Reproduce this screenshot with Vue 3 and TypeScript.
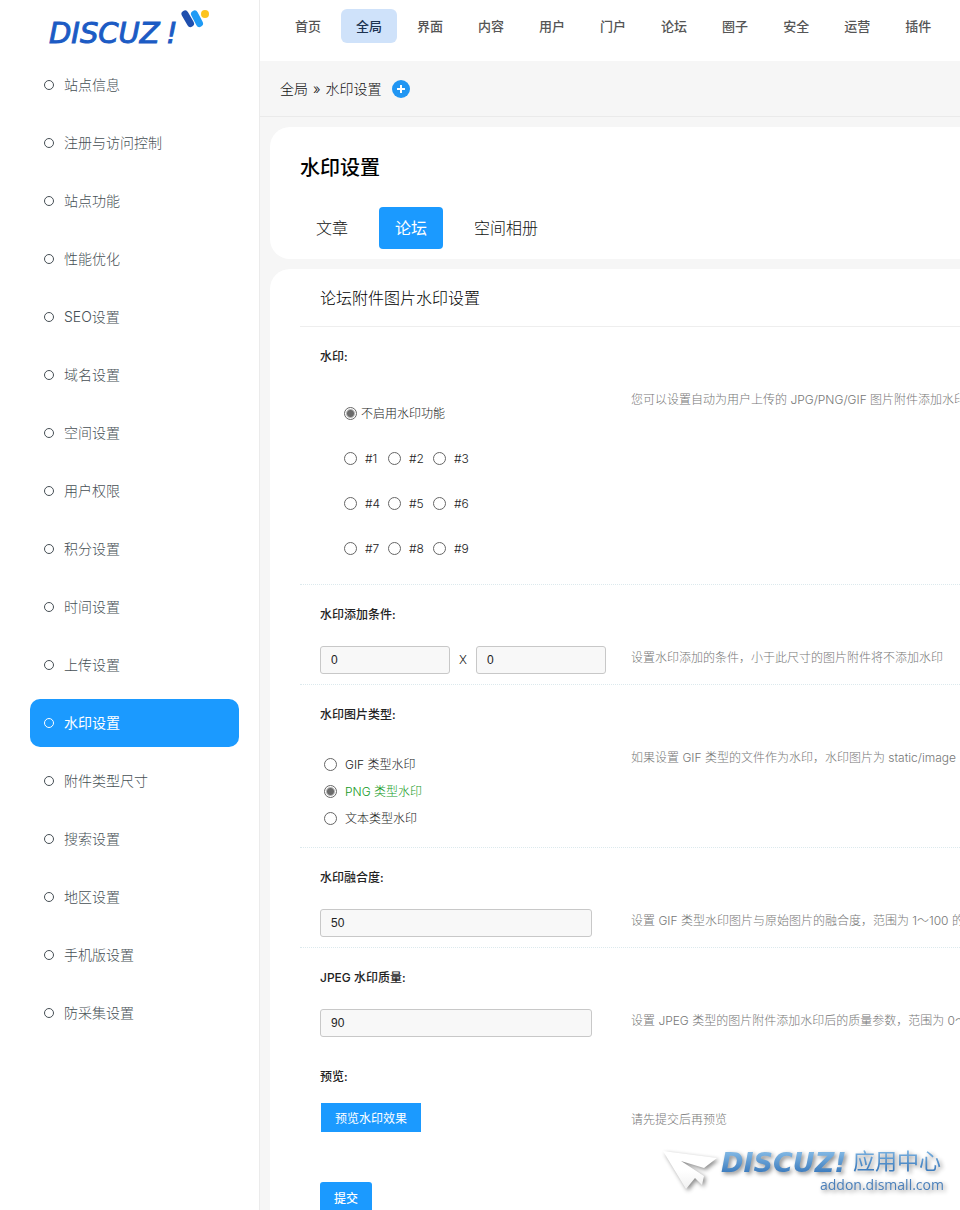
<script setup lang="ts">
import { ref } from 'vue'

const sideItems: string[] = [
  '站点信息', '注册与访问控制', '站点功能', '性能优化', 'SEO设置', '域名设置',
  '空间设置', '用户权限', '积分设置', '时间设置', '上传设置', '水印设置',
  '附件类型尺寸', '搜索设置', '地区设置', '手机版设置', '防采集设置',
]
const topItems: string[] = [
  '首页', '全局', '界面', '内容', '用户', '门户', '论坛', '圈子', '安全', '运营', '插件',
]
const tabs: string[] = ['文章', '论坛', '空间相册']
const types = [
  { value: 'gif', label: 'GIF 类型水印' },
  { value: 'png', label: 'PNG 类型水印' },
  { value: 'text', label: '文本类型水印' },
]

const activeSide = ref('水印设置')
const activeTop = ref('全局')
const activeTab = ref('论坛')
const position = ref(0)
const markType = ref('png')
const minWidth = ref('0')
const minHeight = ref('0')
const opacity = ref('50')
const quality = ref('90')
</script>

<template>
  <div class="shell">
    <aside class="side">
      <a class="logo" href="#" aria-label="Discuz!">
        <svg width="240" height="61" viewBox="0 0 240 61">
          <text x="49" y="43" class="logo-text">DISCUZ</text>
          <text x="166" y="43" class="logo-text">!</text>
          <g stroke-linecap="round" stroke-width="7" fill="none">
            <path d="M194.500 14L199.500 23.500" stroke="#1f9bf5" />
            <path d="M185 14L190.500 23.500" stroke="#1f4fae" />
          </g>
          <circle cx="205" cy="14" r="4" fill="#fcc41f" />
        </svg>
      </a>
      <nav class="side-nav">
        <a
          v-for="item in sideItems"
          :key="item"
          href="#"
          class="side-item"
          :class="{ active: item === activeSide }"
          @click.prevent="activeSide = item"
        >
          <span class="ring"></span>{{ item }}
        </a>
      </nav>
    </aside>

    <div class="main">
      <nav class="top-nav">
        <a
          v-for="item in topItems"
          :key="item"
          href="#"
          class="top-item"
          :class="{ active: item === activeTop }"
          @click.prevent="activeTop = item"
        >{{ item }}</a>
      </nav>

      <div class="crumbs">
        <div class="trail"><span>全局</span><span>»</span><span>水印设置</span></div>
        <button class="add" type="button" aria-label="添加">
          <svg width="18" height="18" viewBox="0 0 18 18">
            <circle cx="9" cy="9" r="9" fill="#2196f3" />
            <path d="M9 5v8M5 9h8" stroke="#fff" stroke-width="2" />
          </svg>
        </button>
      </div>

      <section class="card head-card">
        <h1>水印设置</h1>
        <div class="tabs">
          <a
            v-for="tab in tabs"
            :key="tab"
            href="#"
            class="tab"
            :class="{ active: tab === activeTab }"
            @click.prevent="activeTab = tab"
          >{{ tab }}</a>
        </div>
      </section>

      <form class="card form-card" @submit.prevent>
        <h2>论坛附件图片水印设置</h2>

        <fieldset class="row">
          <legend class="caption">水印:</legend>
          <div class="body">
            <div class="positions">
              <label class="radio near"><input v-model="position" type="radio" name="position" :value="0" />不启用水印功能</label>
              <div v-for="line in 3" :key="line" class="trio">
                <label v-for="n in 3" :key="n" class="radio">
                  <input v-model="position" type="radio" name="position" :value="(line - 1) * 3 + n" />#{{ (line - 1) * 3 + n }}
                </label>
              </div>
            </div>
            <p class="hint">您可以设置自动为用户上传的 JPG/PNG/GIF 图片附件添加水印</p>
          </div>
        </fieldset>

        <fieldset class="row">
          <legend class="caption">水印添加条件:</legend>
          <div class="body">
            <div class="pair">
              <input v-model="minWidth" class="field" type="text" aria-label="宽度" />
              <span>X</span>
              <input v-model="minHeight" class="field" type="text" aria-label="高度" />
            </div>
            <p class="hint">设置水印添加的条件，小于此尺寸的图片附件将不添加水印</p>
          </div>
        </fieldset>

        <fieldset class="row">
          <legend class="caption">水印图片类型:</legend>
          <div class="body">
            <div class="types">
              <label v-for="t in types" :key="t.value" class="radio" :class="{ chosen: markType === t.value }">
                <input v-model="markType" type="radio" name="type" :value="t.value" />{{ t.label }}
              </label>
            </div>
            <p class="hint">如果设置 GIF 类型的文件作为水印，水印图片为 static/image</p>
          </div>
        </fieldset>

        <div class="row">
          <label class="caption" for="opacity">水印融合度:</label>
          <div class="body">
            <input id="opacity" v-model="opacity" class="field wide" type="text" />
            <p class="hint">设置 GIF 类型水印图片与原始图片的融合度，范围为 1～100 的</p>
          </div>
        </div>

        <div class="row plain">
          <label class="caption" for="quality">JPEG 水印质量:</label>
          <div class="body">
            <input id="quality" v-model="quality" class="field wide" type="text" />
            <p class="hint">设置 JPEG 类型的图片附件添加水印后的质量参数，范围为 0～</p>
          </div>
        </div>

        <div class="row plain">
          <span class="caption">预览:</span>
          <div class="body">
            <div class="preview-cell"><button class="preview" type="button">预览水印效果</button></div>
            <p class="hint">请先提交后再预览</p>
          </div>
        </div>

        <button class="submit" type="submit">提交</button>
      </form>
    </div>

    <svg class="stamp" width="320" height="80" viewBox="0 0 320 80" aria-hidden="true">
      <defs>
        <linearGradient id="stampBlue" x1="0" y1="0" x2="0" y2="1">
          <stop offset="0.2" stop-color="#7db4e2" />
          <stop offset="0.8" stop-color="#3f7ebf" />
        </linearGradient>
        <linearGradient id="stampWhite" x1="0" y1="0" x2="0" y2="1">
          <stop offset="0.5" stop-color="#ffffff" />
          <stop offset="1" stop-color="#f1f1f1" />
        </linearGradient>
      </defs>
      <g class="shade">
        <path d="M23 21L77 28L64 38L41 31L64 46L62 55L55 48L46 59Z" fill="url(#stampWhite)" />
        <text x="81" y="42" class="stamp-brand">DISCUZ!</text>
        <text x="213" y="39" class="stamp-cn">应用中心</text>
        <text x="180" y="60" class="stamp-url">addon.dismall.com</text>
      </g>
    </svg>
  </div>
</template>

<style>
body {
  margin: 0;
  background: #f6f6f6;
}
</style>

<style scoped>
* {
  box-sizing: border-box;
}
.shell {
  display: flex;
  height: 100vh;
  overflow: hidden;
  position: relative;
  background: #f6f6f6;
  font-family: Inter, "Noto Sans CJK SC", sans-serif;
  font-size: 12px;
  font-weight: 300;
  line-height: 20px;
  color: #222;
}
a {
  color: inherit;
  text-decoration: none;
}
.side {
  flex: 0 0 260px;
  background: #fff;
  border-right: 1px solid #ebebeb;
}
.logo,
.logo svg {
  display: block;
}
.logo-text {
  font: italic 400 29px "DejaVu Sans", sans-serif;
  fill: #1c5bc4;
  stroke: #1c5bc4;
  stroke-width: 1;
}
.side-nav {
  display: flex;
  flex-direction: column;
  gap: 10px;
  padding: 0 20px 0 30px;
}
.side-item {
  display: flex;
  align-items: center;
  gap: 10px;
  height: 48px;
  padding-left: 14px;
  border-radius: 10px;
  font-size: 14px;
  color: #464f55;
}
.side-item.active {
  background: #1b9aff;
  color: #fff;
  font-weight: 400;
}
.ring {
  width: 10px;
  height: 10px;
  border: 1px solid currentColor;
  border-radius: 50%;
}
.main {
  flex: 1;
  min-width: 0;
  overflow: auto;
  scrollbar-width: none;
}
.top-nav {
  display: flex;
  gap: 5px;
  height: 61px;
  padding: 9px 20px;
  background: #fff;
  overflow: hidden;
}
.top-item {
  flex: none;
  height: 34px;
  padding: 0 15px;
  border-radius: 6px;
  font-size: 13px;
  font-weight: 500;
  line-height: 34px;
  color: #555;
}
.top-item.active {
  background: #cfe2fa;
  color: #1c3350;
}
.crumbs {
  display: flex;
  align-items: center;
  gap: 10px;
  height: 56px;
  padding: 0 20px;
  border-bottom: 1px solid #eaeaea;
  font-size: 14px;
  color: #111;
}
.trail {
  display: flex;
  gap: 5px;
}
.add {
  padding: 0;
  border: 0;
  background: none;
}
.add svg {
  display: block;
}
.card {
  margin: 10px 0 0 10px;
  background: #fff;
  border-radius: 20px 0 0 20px;
}
.head-card {
  padding: 26px 30px 10px;
}
h1 {
  margin: 0 0 24px;
  font-size: 20px;
  font-weight: 500;
  line-height: 30px;
  color: #000;
}
.tabs {
  display: flex;
  gap: 15px;
}
.tab {
  height: 42px;
  padding: 0 16px;
  border-radius: 4px;
  font-size: 16px;
  line-height: 42px;
  color: #111;
}
.tab.active {
  background: #1b9aff;
  color: #fff;
  font-weight: 400;
}
.form-card {
  padding: 0 0 30px 30px;
  overflow: hidden;
}
h2 {
  margin: 0;
  padding: 1px 0 0 20px;
  border-bottom: 1px solid #eee;
  font-size: 16px;
  font-weight: 300;
  line-height: 56px;
  color: #000;
}
.row {
  min-width: 0;
  margin: 0;
  padding: 0 0 10px 20px;
  border: 0;
  border-bottom: 1px dotted #dce9ed;
}
.row.plain {
  border-bottom: 0;
}
.caption {
  display: block;
  padding: 20px 0 21px;
  font-weight: 500;
  color: #222;
}
.body {
  display: grid;
  grid-template-columns: 311px minmax(0, 1fr);
  align-items: start;
}
.hint {
  margin: 2px 0 0;
  white-space: nowrap;
  overflow: hidden;
  color: #777;
}
.positions {
  margin: 3px 0 3px 24px;
  line-height: 45px;
}
.trio {
  display: grid;
  grid-template-columns: 44px 45px 45px;
}
.radio {
  display: flex;
  align-items: center;
  gap: 8px;
}
.radio.near {
  gap: 4px;
}
.radio.chosen {
  color: #149a1e;
}
.radio input {
  appearance: none;
  flex: none;
  width: 13px;
  height: 13px;
  margin: 0;
  border: 1px solid #666;
  border-radius: 50%;
  background: #fff;
}
.radio input:checked {
  background: radial-gradient(circle, #6b6b6b 3px, #fff 5px);
}
.types {
  margin: 5px 0 5px 4px;
  line-height: 27px;
}
.pair {
  display: grid;
  grid-template-columns: 130px 26px 130px;
  width: 286px;
  align-items: center;
  text-align: center;
}
.field {
  width: 100%;
  height: 28px;
  padding: 0 10px;
  border: 1px solid #c8c8c8;
  border-radius: 3px;
  background: #f8f8f8;
  font: 400 12px "Liberation Sans", sans-serif;
  color: #222;
}
.field.wide {
  width: 272px;
}
.preview-cell {
  display: flex;
  margin: -5px 0 0 1px;
}
.preview,
.submit {
  border: 0;
  background: #1b9aff;
  color: #fff;
  font-family: inherit;
  font-size: 12px;
}
.preview {
  height: 29px;
  padding: 0 14px;
  font-weight: 400;
}
.submit {
  display: block;
  height: 30px;
  margin: 40px 0 0 20px;
  padding: 0 14px;
  border-radius: 3px;
  font-weight: 500;
}
.stamp {
  position: absolute;
  right: 0;
  bottom: 0;
  pointer-events: none;
}
.shade {
  filter: drop-shadow(2px 2px 2px rgba(0, 0, 0, 0.45));
}
.stamp-brand {
  font: italic 700 27px "DejaVu Sans", sans-serif;
  fill: url(#stampBlue);
}
.stamp-cn {
  font: 400 22px "Noto Sans CJK SC", sans-serif;
  fill: url(#stampBlue);
}
.stamp-url {
  font: 400 14px "Open Sans", sans-serif;
  fill: #4b80bb;
}
</style>
